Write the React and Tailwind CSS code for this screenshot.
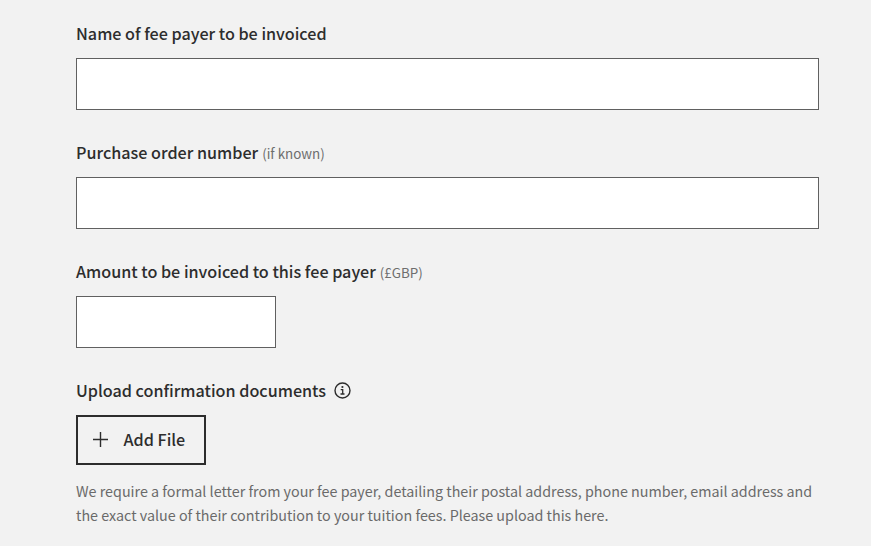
import React from 'react';

const Label = ({ text, hint, htmlFor, children }) => (
  <div className="flex h-6 items-baseline whitespace-nowrap leading-6">
    <label htmlFor={htmlFor} className="text-[16.15px] font-medium text-[#2d2d2d]">
      {text}
    </label>
    {hint && <span className="ml-1 text-[13.4px] text-[#6e6e6e]">{hint}</span>}
    {children}
  </div>
);

const Field = ({ id, label, hint, narrow }) => (
  <div className="mb-[30px]">
    <Label text={label} hint={hint} htmlFor={id} />
    <input
      id={id}
      type="text"
      className={`mt-[13px] block h-[52px] border border-[#606060] bg-white px-3 outline-none ${narrow ? 'w-[200px]' : 'w-full'}`}
    />
  </div>
);

const InfoIcon = () => (
  <svg className="ml-2 h-[17px] w-[17px] self-center text-[#2d2d2d]" viewBox="0 0 17 17" fill="none" stroke="currentColor">
    <circle cx="8.5" cy="8.5" r="7.5" strokeWidth="1.4" />
    <circle cx="8.4" cy="5" r="1.1" fill="currentColor" stroke="none" />
    <path d="M6.7 7.6h2v4.3M6.5 12h4" strokeWidth="1.3" />
  </svg>
);

const PlusIcon = () => (
  <svg className="h-[15px] w-[15px]" viewBox="0 0 15 15" fill="none" stroke="currentColor" strokeWidth="1.4">
    <path d="M7.5 0v15M0 7.5h15" />
  </svg>
);

const App = () => {
  return (
    <main className="h-screen overflow-hidden bg-[#f2f2f2] pl-[76px] pt-[21px] font-['Noto_Sans_CJK_SC',sans-serif]">
      <form className="w-[743px]">
        <Field id="payer" label="Name of fee payer to be invoiced" />
        <Field id="order" label="Purchase order number" hint="(if known)" />
        <Field id="amount" label="Amount to be invoiced to this fee payer" hint="(£GBP)" narrow />

        <Label text="Upload confirmation documents">
          <InfoIcon />
        </Label>
        <button
          type="button"
          className="mt-[13px] flex h-[50px] w-[130px] items-center border-2 border-[#2d2d2d] pb-px pl-[15px] text-[16.15px] font-medium text-[#2d2d2d]"
        >
          <PlusIcon />
          <span className="ml-[15.5px] whitespace-nowrap">Add File</span>
        </button>

        <p className="mt-[14px] whitespace-nowrap text-[14.32px] leading-6 text-[#6a6a6a]">
          We require a formal letter from your fee payer, detailing their postal address, phone number, email address and
          <br />
          the exact value of their contribution to your tuition fees. Please upload this here.
        </p>
      </form>
    </main>
  );
};

export default App;
